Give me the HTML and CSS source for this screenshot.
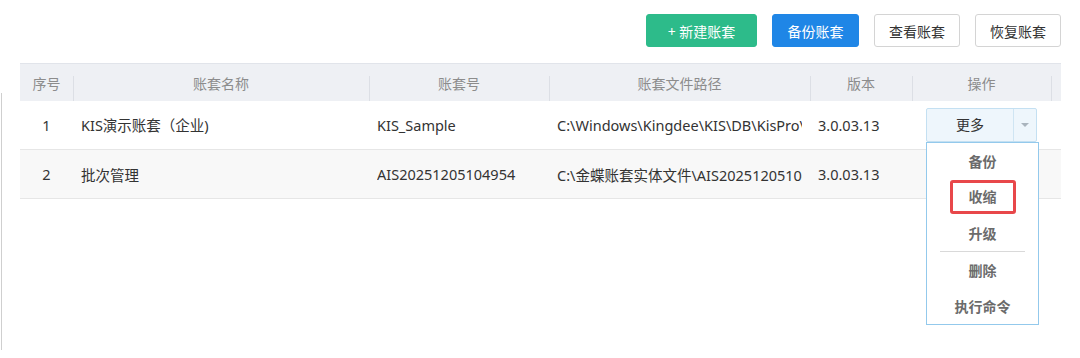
FILE: index.html
```html
<!DOCTYPE html>
<html lang="zh-CN">
<head>
  <meta charset="utf-8" />
  <title>账套管理</title>
  <link rel="stylesheet" href="styles.css">
</head>
<body>
  <div class="page">
    <!-- left panel edge -->
    <div class="edge"></div>

    <div class="main">
      <!-- TOOLBAR -->
      <div class="toolbar">
        <button class="btn btnGreen">+ 新建账套</button>
        <button class="btn btnBlue">备份账套</button>
        <button class="btn btnPlain">查看账套</button>
        <button class="btn btnPlain">恢复账套</button>
      </div>

      <!-- TABLE -->
      <table class="grid">
        <colgroup>
          <col style="width:53px">
          <col style="width:296px">
          <col style="width:180px">
          <col style="width:261px">
          <col style="width:102px">
          <col style="width:139px">
          <col style="width:10px">
        </colgroup>
        <thead>
          <tr>
            <th>序号</th>
            <th>账套名称</th>
            <th>账套号</th>
            <th>账套文件路径</th>
            <th>版本</th>
            <th>操作</th>
            <th></th>
          </tr>
        </thead>
        <tbody>
          <tr>
            <td class="num">1</td>
            <td><div class="cell">KIS演示账套（企业)</div></td>
            <td><div class="cell">KIS_Sample</div></td>
            <td><div class="cell">C:\Windows\Kingdee\KIS\DB\KisPro\KIS_Sample.AIS</div></td>
            <td><div class="cell">3.0.03.13</div></td>
            <td class="ops">
              <div class="split">
                <span class="splitMain">更多</span>
                <span class="splitArrow"><i class="caret"></i></span>
                <ul class="menu">
                  <li>备份</li>
                  <li><span class="mark">收缩</span></li>
                  <li>升级</li>
                  <li class="divider"></li>
                  <li>删除</li>
                  <li>执行命令</li>
                </ul>
              </div>
            </td>
            <td></td>
          </tr>
          <tr class="stripe">
            <td class="num">2</td>
            <td><div class="cell">批次管理</div></td>
            <td><div class="cell">AIS20251205104954</div></td>
            <td><div class="cell">C:\金蝶账套实体文件\AIS20251205104954.AIS</div></td>
            <td><div class="cell">3.0.03.13</div></td>
            <td></td>
            <td></td>
          </tr>
        </tbody>
      </table>
    </div>
  </div>
</body>
</html>
```

FILE: styles.css
```css
/* ========== GLOBAL ========== */
* {
  box-sizing: border-box;
  margin: 0;
  padding: 0;
}
body {
  width: 1080px;
  height: 358px;
  background: #fff;
  font-family: "Noto Sans", "Noto Sans CJK SC", sans-serif;
  font-size: 14px;
  color: #333;
  overflow: hidden;
}
.page {
  display: flex;
}
.edge {
  width: 1px;
  height: 257px;
  margin: 93px 0 0 1px;
  background: #cfcfcf;
}
.main {
  margin-left: 18px;
  width: 1042px;
}

/* ========== TOOLBAR ========== */
.toolbar {
  display: flex;
  justify-content: flex-end;
  gap: 15px;
  margin-top: 14px;
  padding-right: 1px;
}
.btn {
  height: 33px;
  width: 86px;
  border-radius: 3px;
  border: 1px solid #d4d4d4;
  background: #fff;
  color: #333;
  font-family: inherit;
  font-size: 14px;
  cursor: pointer;
}
.btnGreen {
  width: 111px;
  background: #2dbb8a;
  border-color: #2dbb8a;
  color: #fff;
}
.btnBlue {
  width: 87px;
  background: #1f86e6;
  border-color: #1f86e6;
  color: #fff;
}

/* ========== TABLE ========== */
.grid {
  margin-top: 16px;
  width: 1041px;
  table-layout: fixed;
  border-collapse: collapse;
  border-top: 1px solid #e1e4ea;
}
.grid th {
  position: relative;
  height: 37px;
  padding-top: 2px;
  background: #eef0f4;
  color: #8c8c8c;
  font-weight: normal;
  text-align: center;
}
.grid th + th::before {
  content: "";
  position: absolute;
  left: 0;
  top: 12px;
  bottom: 0;
  width: 1px;
  background: #dcdfe5;
}
.grid td {
  height: 49px;
  padding: 0 8px;
  border-bottom: 1px solid #e6e6e6;
  font-size: 14.5px;
}
.cell {
  white-space: nowrap;
  overflow: hidden;
}
.grid td.num {
  text-align: center;
  padding: 0;
}
.grid td.ops {
  padding: 1px 0 0 14px;
  font-size: 14px;
}
.stripe td {
  background: #f8f8f8;
}

/* ========== SPLIT BUTTON ========== */
.split {
  position: relative;
  display: flex;
  width: 111px;
  height: 34px;
  border: 1px solid #c4e0f2;
  border-radius: 2px;
  background: #eef6fc;
}
.splitMain {
  width: 87px;
  line-height: 32px;
  text-align: center;
  border-right: 1px solid #cfe5f3;
}
.splitArrow {
  flex: 1;
  display: flex;
  align-items: center;
  justify-content: center;
}
.caret {
  width: 0;
  height: 0;
  border-left: 4px solid transparent;
  border-right: 4px solid transparent;
  border-top: 4px solid #a9b4bd;
}

/* ========== MENU ========== */
.menu {
  position: absolute;
  top: 33px;
  left: -1px;
  width: 113px;
  list-style: none;
  background: #fff;
  border: 1px solid #93c9ec;
  z-index: 10;
}
.menu li {
  height: 36px;
  line-height: 38px;
  text-align: center;
  font-weight: bold;
  color: #6b6b6b;
}
.menu li.divider {
  height: 1px;
  margin: 0 13px;
  background: #d9d9d9;
}
.mark {
  display: inline-block;
  vertical-align: middle;
  line-height: 28px;
  padding: 0 16px;
  margin-top: -4px;
  border: 3px solid #e8474a;
  border-radius: 3px;
}
```
